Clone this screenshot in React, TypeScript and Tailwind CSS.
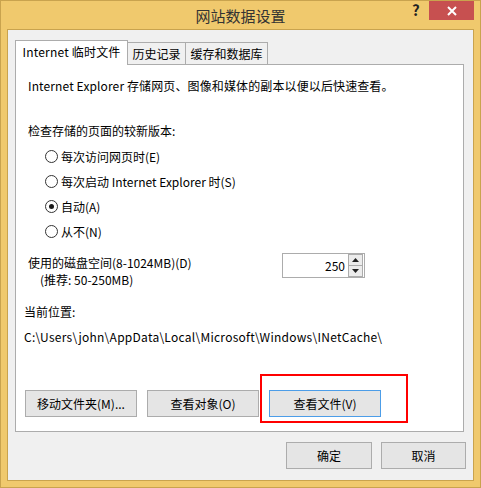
import React from "react";

const font = { fontFamily: '"Noto Sans CJK SC", "Noto Sans", sans-serif' };

const Radio = ({ checked, label }: { checked?: boolean; label: string }) => (
  <div className="h-[25px] flex items-center ml-[17px]">
    <span className="w-[13px] h-[13px] rounded-full border border-[#333] bg-white flex items-center justify-center">
      {checked && <span className="w-[5px] h-[5px] rounded-full bg-[#1a1a1a]" />}
    </span>
    <span className="ml-[3px]">{label}</span>
  </div>
);

const Btn = ({ label, w, primary }: { label: string; w: string; primary?: boolean }) => (
  <div
    className={`${w} h-[27px] flex items-center justify-center border bg-[#e5e5e5] ${
      primary ? "border-[#4c9de8]" : "border-[#acacac]"
    }`}>
    {label}
  </div>
);

export default function App() {
  return (
    <div className="relative w-[481px] h-[488px] bg-[#f0c96d] border border-[#c9a34e] flex flex-col text-[12px] leading-[16px] text-black" style={font}>
      {/* title bar */}
      <div className="relative h-[28px] flex items-center justify-center">
        <span className="text-[15px] text-[#333] pt-[2px]">网站数据设置</span>
        <span className="absolute left-[411px] top-[1px] text-[15px] font-bold text-[#222]">?</span>
        <div className="absolute left-[428px] top-0 w-[45px] h-[19px] bg-[#c75050] flex items-center justify-center">
          <svg width="10" height="10" viewBox="0 0 10 10">
            <path d="M1 1L9 9M9 1L1 9" stroke="#fff" strokeWidth="2" />
          </svg>
        </div>
      </div>

      {/* client area */}
      <div className="mx-[6px] mb-[6px] flex-1 border border-[#c9a34e] bg-[#f0f0f0] flex flex-col px-[7px] pt-[10px]">
        {/* tabs */}
        <div className="h-[24px] flex items-end">
          <div className="relative z-10 -mb-px h-[25px] w-[113px] bg-white border border-b-0 border-[#acacac] flex items-center justify-center pb-[2px] tracking-[0.2px]">
            Internet 临时文件
          </div>
          <div className="h-[22px] w-[58px] bg-[#f0f0f0] border border-l-0 border-b-0 border-[#acacac] flex items-center justify-center">
            历史记录
          </div>
          <div className="h-[22px] w-[82px] bg-[#f0f0f0] border border-l-0 border-b-0 border-[#acacac] flex items-center justify-center">
            缓存和数据库
          </div>
        </div>

        {/* panel */}
        <div className="w-[449px] h-[368px] bg-white border border-[#acacac] flex flex-col pt-[13px]">
          <div className="ml-[12px] tracking-[0.12px]">Internet Explorer 存储网页、图像和媒体的副本以便以后快速查看。</div>
          <div className="ml-[12px] mt-[29px]">检查存储的页面的较新版本:</div>
          <div className="ml-[12px] mt-[5px] flex flex-col">
            <Radio label="每次访问网页时(E)" />
            <Radio label="每次启动 Internet Explorer 时(S)" />
            <Radio label="自动(A)" checked />
            <Radio label="从不(N)" />
          </div>

          <div className="mt-[9px] ml-[12px] flex items-start">
            <div className="pt-[1px] leading-[17px] w-[254px]">
              <div>使用的磁盘空间(8-1024MB)(D)</div>
              <div className="pl-[12px]">(推荐: 50-250MB)</div>
            </div>
            <div className="w-[83px] h-[25px] border border-[#acacac] flex items-center">
              <span className="flex-1 text-right pr-[3px]">250</span>
              <div className="w-[15px] h-[23px] flex flex-col mr-[1px]">
                <div className="flex-1 border border-[#acacac] bg-[#ececec] flex items-center justify-center">
                  <svg width="7" height="4" viewBox="0 0 7 4"><path d="M0 4L3.5 0L7 4Z" fill="#222" /></svg>
                </div>
                <div className="flex-1 border border-t-0 border-[#acacac] bg-[#ececec] flex items-center justify-center">
                  <svg width="7" height="4" viewBox="0 0 7 4"><path d="M0 0L3.5 4L7 0Z" fill="#222" /></svg>
                </div>
              </div>
            </div>
          </div>

          <div className="ml-[8px] mt-[16px]">当前位置:</div>
          <div className="ml-[8px] mt-[9px] tracking-[0.26px]">C:\Users\john\AppData\Local\Microsoft\Windows\INetCache\</div>

          <div className="ml-[9px] mt-[45px] flex gap-[10px]">
            <Btn label="移动文件夹(M)..." w="w-[112px]" />
            <Btn label="查看对象(O)" w="w-[112px]" />
            <Btn label="查看文件(V)" w="w-[112px]" primary />
          </div>
        </div>

        {/* dialog buttons */}
        <div className="mt-[10px] flex justify-end gap-[9px]">
          <Btn label="确定" w="w-[86px]" />
          <Btn label="取消" w="w-[85px]" />
        </div>
      </div>

      {/* red highlight */}
      <div className="absolute left-[259px] top-[373px] w-[148px] h-[49px] border-2 border-[#ff0000]" />
    </div>
  );
}
